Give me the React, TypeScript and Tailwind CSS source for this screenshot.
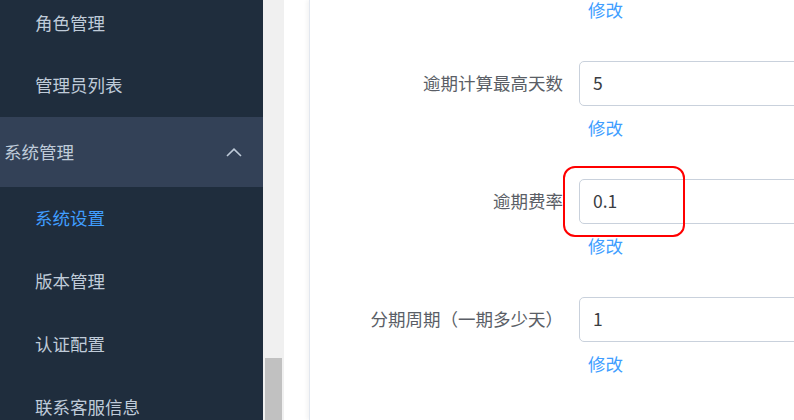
const menuBefore = [
  { label: "角色管理", h: "h-[62px]" },
  { label: "管理员列表", h: "h-[63px]" },
];

const subItems = [
  { label: "系统设置", active: true },
  { label: "版本管理", active: false },
  { label: "认证配置", active: false },
  { label: "联系客服信息", active: false },
];

const fields = [
  { label: "逾期计算最高天数", value: "5" },
  { label: "逾期费率", value: "0.1" },
  { label: "分期周期（一期多少天）", value: "1" },
];

function EditLink() {
  return (
    <div className="flex h-[45px] items-center pl-[278px]">
      <span className="text-[17.5px] text-[#409eff]">修改</span>
    </div>
  );
}

function Sidebar() {
  return (
    <aside className="w-[263px] shrink-0 overflow-hidden bg-[#1f2d3d] text-[17.5px] text-[#bfcbd9]">
      <div className="-mt-[8px] flex flex-col">
        {menuBefore.map((m) => (
          <div key={m.label} className={`flex items-center pl-[35px] ${m.h}`}>
            {m.label}
          </div>
        ))}
        <div className="flex h-[70px] items-center justify-between bg-[#334157] pl-[4px] pr-[21px]">
          <span>系统管理</span>
          <svg width="16" height="9" viewBox="0 0 16 9" fill="none">
            <path d="M1 8 L8 1.2 L15 8" stroke="#bfcbd9" strokeWidth="1.6" />
          </svg>
        </div>
        {subItems.map((s) => (
          <div
            key={s.label}
            className={`flex h-[63px] items-center pl-[35px] ${s.active ? "text-[#409eff]" : ""}`}
          >
            {s.label}
          </div>
        ))}
      </div>
    </aside>
  );
}

export default function App() {
  return (
    <div
      className="relative flex h-[420px] w-[794px] overflow-hidden bg-white"
      style={{ fontFamily: '"Noto Sans CJK SC", "Noto Sans", sans-serif' }}
    >
      <Sidebar />
      <div className="flex w-[21px] shrink-0 flex-col bg-[#f0f0f0] pt-[358px]">
        <div className="ml-[2px] h-[80px] w-[17px] bg-[#c1c1c1]" />
      </div>
      <main className="flex flex-1 pl-[25px]">
        <div className="flex-1 border-l border-[#e2e7ef] shadow-[-2px_0_4px_rgba(0,0,0,0.05)]">
          <div className="-mt-[12px] flex flex-col">
            <EditLink />
            {fields.map((f) => (
              <div key={f.label} className="mt-[28px] flex flex-col">
                <div className="flex items-center">
                  <label className="w-[253px] shrink-0 whitespace-nowrap text-right text-[17.5px] text-[#5a5e66]">
                    {f.label}
                  </label>
                  <div className="ml-[16px] flex h-[45px] w-[400px] shrink-0 items-center rounded-[5px] border border-[#c9d1dc] pl-[13px] text-[17.5px] text-[#3a3d42]">
                    {f.value}
                  </div>
                </div>
                <EditLink />
              </div>
            ))}
          </div>
        </div>
      </main>
      <div className="absolute left-[563px] top-[166px] h-[71px] w-[122px] rounded-[12px] border-2 border-[#f00]" />
    </div>
  );
}
